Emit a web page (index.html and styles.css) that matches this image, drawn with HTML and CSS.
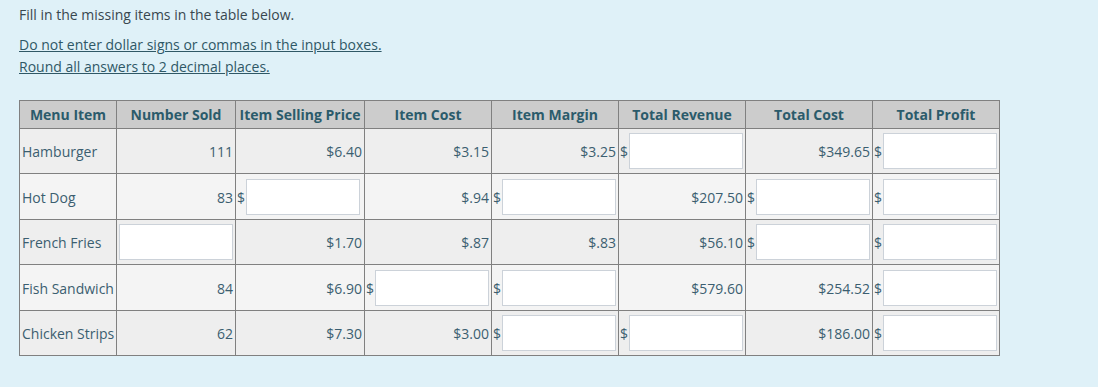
FILE: index.html
```html
<!DOCTYPE html>
<html>
<head>
<meta charset="utf-8">
<link rel="stylesheet" href="styles.css">
</head>
<body>
<p class="intro">Fill in the missing items in the table below.</p>
<p class="notes"><a class="note" href="#">Do not enter dollar signs or commas in the input boxes.</a><br><a class="note" href="#">Round all answers to 2 decimal places.</a></p>
<table class="grid">
<colgroup>
<col class="c1"><col class="c2"><col class="c3"><col class="c4"><col class="c4"><col class="c4"><col class="c4"><col class="c4">
</colgroup>
<thead>
<tr><th>Menu Item</th><th>Number Sold</th><th>Item Selling Price</th><th>Item Cost</th><th>Item Margin</th><th>Total Revenue</th><th>Total Cost</th><th>Total Profit</th></tr>
</thead>
<tbody>
<tr class="odd">
<td class="name">Hamburger</td><td class="num">111</td><td class="num">$6.40</td><td class="num">$3.15</td><td class="num">$3.25</td>
<td class="inp">$<input class="box" type="text"></td><td class="num">$349.65</td><td class="inp">$<input class="box" type="text"></td>
</tr>
<tr class="even">
<td class="name">Hot Dog</td><td class="num">83</td><td class="inp">$<input class="box" type="text"></td><td class="num">$.94</td><td class="inp">$<input class="box" type="text"></td>
<td class="num">$207.50</td><td class="inp">$<input class="box" type="text"></td><td class="inp">$<input class="box" type="text"></td>
</tr>
<tr class="odd">
<td class="name">French Fries</td><td class="inp"><input class="box" type="text"></td><td class="num">$1.70</td><td class="num">$.87</td><td class="num">$.83</td>
<td class="num">$56.10</td><td class="inp">$<input class="box" type="text"></td><td class="inp">$<input class="box" type="text"></td>
</tr>
<tr class="even">
<td class="name">Fish Sandwich</td><td class="num">84</td><td class="num">$6.90</td><td class="inp">$<input class="box" type="text"></td><td class="inp">$<input class="box" type="text"></td>
<td class="num">$579.60</td><td class="num">$254.52</td><td class="inp">$<input class="box" type="text"></td>
</tr>
<tr class="odd">
<td class="name">Chicken Strips</td><td class="num">62</td><td class="num">$7.30</td><td class="num">$3.00</td><td class="inp">$<input class="box" type="text"></td>
<td class="inp">$<input class="box" type="text"></td><td class="num">$186.00</td><td class="inp">$<input class="box" type="text"></td>
</tr>
</tbody>
</table>
<div class="actions"><div class="btn"></div></div>
</body>
</html>
```
FILE: styles.css
```css
html, body {
  margin: 0;
  background: #dff1f8;
}
body {
  padding: 4px 19px 0 19px;
  font-family: "Open Sans", "Noto Sans", sans-serif;
  font-size: 14px;
  line-height: 22px;
  color: #38474f;
  height: 383px;
  overflow: hidden;
}
.intro {
  margin: 0 0 8px 0;
}
.notes {
  margin: 0 0 22px 0;
}
.note {
  color: #2f5866;
  text-decoration: underline;
}
.grid {
  border-collapse: collapse;
  table-layout: fixed;
  width: 981px;
  border: 1px solid #808080;
  color: #3b5e70;
}
.c1 { width: 97px; }
.c2 { width: 119px; }
.c3 { width: 129px; }
.c4 { width: 127px; }
.grid th {
  background: #cccccc;
  color: #2b5b6b;
  font-weight: bold;
  height: 27px;
  padding: 0 2px;
  border: 1px solid #808080;
  text-align: center;
  white-space: nowrap;
}
.grid td {
  border: 1px solid #808080;
  padding: 2px 2px 0 2px;
  height: 42px;
  vertical-align: middle;
  white-space: nowrap;
}
.grid .even td { height: 43px; }
.odd td { background: #eeeeee; }
.even td { background: #f4f4f4; }
.name { text-align: left; }
.num { text-align: right; }
.grid td.inp { text-align: left; padding: 0 1px; }
.box {
  box-sizing: border-box;
  width: 114px;
  height: 36px;
  border: 1px solid #ccd2d9;
  background: #ffffff;
  margin: 0 0 0 1px;
  padding: 0 4px;
  font: inherit;
}
.actions {
  margin-top: 31px;
}
.btn {
  width: 66px;
  height: 30px;
  border: 1px solid #c8cdd2;
  background: #f2f4f5;
  border-radius: 2px;
}
```
